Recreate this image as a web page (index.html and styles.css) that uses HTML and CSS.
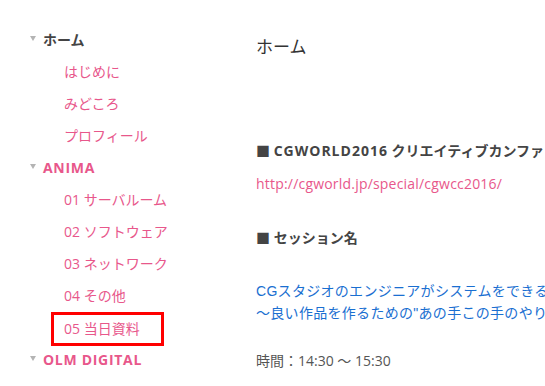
FILE: index.html
```html
<!DOCTYPE html>
<html lang="ja">
<head>
<meta charset="utf-8">
<link rel="stylesheet" href="styles.css">
</head>
<body>
<div class="page">
  <nav class="side">
    <ul class="tree">
      <li class="top"><span class="tri"></span><a class="top-link dark" href="#">ホーム</a></li>
      <li class="child"><a href="#">はじめに</a></li>
      <li class="child"><a href="#">みどころ</a></li>
      <li class="child"><a href="#">プロフィール</a></li>
      <li class="top"><span class="tri"></span><a class="top-link" href="#">ANIMA</a></li>
      <li class="child"><a href="#">01 サーバルーム</a></li>
      <li class="child"><a href="#">02 ソフトウェア</a></li>
      <li class="child"><a href="#">03 ネットワーク</a></li>
      <li class="child"><a href="#">04 その他</a></li>
      <li class="child"><a class="current" href="#">05 当日資料</a></li>
      <li class="top"><span class="tri"></span><a class="top-link" href="#">OLM DIGITAL</a></li>
    </ul>
  </nav>
  <main class="content">
    <h1 class="title">ホーム</h1>
    <p class="sec sec-first">■ <span class="latin">CGWORLD2016</span> クリエイティブカンファレンス</p>
    <p class="url"><a href="#">http://cgworld.jp/special/cgwcc2016/</a></p>
    <p class="sec sec-second">■ セッション名</p>
    <p class="session"><a href="#">CGスタジオのエンジニアがシステムをできるだけ楽に管理する方法<br>〜良い作品を作るための"あの手この手のやりかた"〜</a></p>
    <p class="time">時間：14:30 〜 15:30</p>
  </main>
</div>
</body>
</html>
```

FILE: styles.css
```css
html, body {
  margin: 0;
  padding: 0;
  background: #fff;
  overflow: hidden;
}
body {
  font-family: "Open Sans", "Noto Sans CJK JP", sans-serif;
  font-size: 14px;
  color: #444;
}
a {
  text-decoration: none;
  color: #e8578b;
}
.page {
  display: flex;
  width: 545px;
  height: 386px;
  overflow: hidden;
}
.side {
  width: 256px;
  flex: none;
}
.tree {
  list-style: none;
  margin: 0;
  padding: 24px 0 0 0;
}
.tree li {
  height: 32px;
  display: flex;
  align-items: center;
}
.top {
  padding-left: 30px;
}
.tri {
  width: 0;
  height: 0;
  border-left: 3px solid transparent;
  border-right: 3px solid transparent;
  border-top: 5px solid #b4b4b4;
  margin-right: 7px;
  margin-top: -4px;
}
.top-link {
  font-weight: 700;
  line-height: 20px;
  letter-spacing: 0.7px;
}
.top-link.dark {
  color: #444;
  letter-spacing: 0;
}
.child {
  padding-left: 64px;
}
.child a {
  line-height: 20px;
}
.child a.current {
  line-height: 28px;
  width: 97px;
  padding-left: 10px;
  margin-left: -10px;
  margin-top: 2px;
  outline: 3px solid #f00;
}
.content {
  flex: 1;
  min-width: 0;
  white-space: nowrap;
}
.title {
  font-size: 17px;
  font-weight: 400;
  line-height: 24px;
  color: #333;
  margin: 35px 0 0 0;
}
.content p {
  margin: 0;
  line-height: 22px;
}
.sec {
  font-weight: 700;
  color: #444;
}
.latin {
  letter-spacing: 1px;
}
.sec-first {
  margin-top: 81px !important;
}
.url {
  margin-top: 11px !important;
}
.url a {
  letter-spacing: 0.2px;
}
.sec-second {
  margin-top: 32px !important;
}
.session {
  margin-top: 31px !important;
  font-family: "Liberation Sans", "Noto Sans CJK JP", sans-serif;
  letter-spacing: 0.3px;
}
.session a {
  color: #1a6fd1;
}
.time {
  margin-top: 26px !important;
  color: #555;
}
```
